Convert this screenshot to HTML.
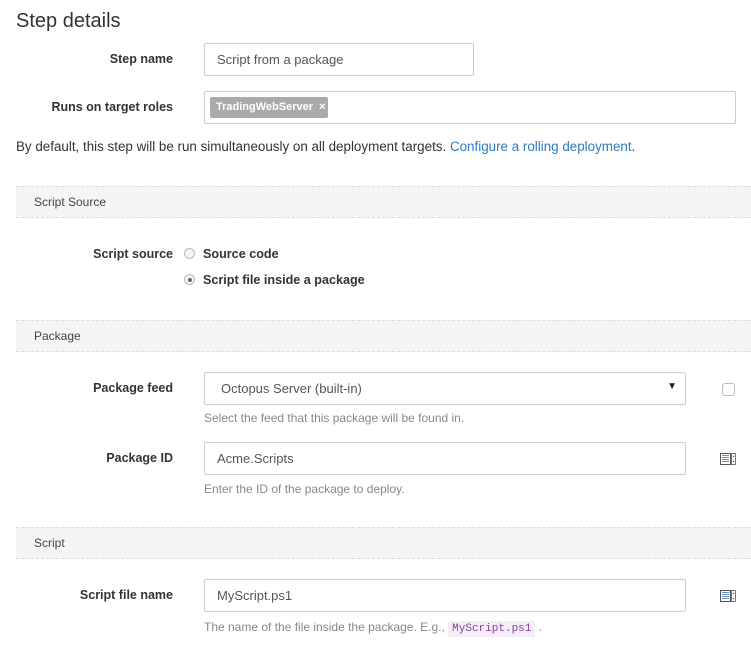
<!DOCTYPE html>
<html><head><style>
body{margin:0;width:751px;height:649px;background:#fff;font-family:"Liberation Sans",sans-serif;color:#333;position:relative;overflow:hidden;font-size:13px}
.a{position:absolute;white-space:nowrap}
.lbl{position:absolute;right:578px;font-weight:bold;font-size:12.5px;color:#333}
.inp{position:absolute;border:1px solid #ccc;border-radius:2px;background:#fff;box-sizing:border-box}
.inp span{position:absolute;left:12px;top:8px;font-size:13px;color:#555}
.band{position:absolute;left:16px;width:735px;height:32px;background:#f5f5f5;border-top:1px dashed #ddd;border-bottom:1px dashed #ddd;box-sizing:border-box}
.band span{position:absolute;left:18px;top:8px;font-size:12px;color:#444}
.help{position:absolute;left:204px;font-size:12px;color:#888}
.radio{position:absolute;left:184px;width:11px;height:11px;border:1px solid #bbb;border-radius:50%;background:#f4f4f4;box-sizing:border-box}
.ic{position:absolute;left:720px;width:16px;height:12px}
</style></head><body>
<div class="a" style="left:16px;top:10px;font-size:20px;color:#333">Step details</div>

<div class="lbl" style="top:52px">Step name</div>
<div class="inp" style="left:204px;top:43px;width:270px;height:33px"><span>Script from a package</span></div>

<div class="lbl" style="top:100px">Runs on target roles</div>
<div class="inp" style="left:204px;top:91px;width:532px;height:33px">
<div class="a" style="left:5px;top:5px;width:118px;height:21px;background:#aaa;border-radius:2px;color:#fff;font-size:11px;font-weight:bold;line-height:21px;padding-left:6px;box-sizing:border-box">TradingWebServer &nbsp;×</div></div>

<div class="a" style="left:16px;top:139px;font-size:13.4px">By default, this step will be run simultaneously on all deployment targets. <span style="color:#2e7bbf">Configure a rolling deployment</span>.</div>

<div class="band" style="top:186px"><span>Script Source</span></div>
<div class="lbl" style="top:247px">Script source</div>
<div class="radio" style="top:248px"></div>
<div class="a" style="left:203px;top:247px;font-weight:bold;font-size:12.6px">Source code</div>
<div class="radio" style="top:274px"><div style="position:absolute;left:2.5px;top:2.5px;width:4px;height:4px;border-radius:50%;background:#666"></div></div>
<div class="a" style="left:203px;top:273px;font-weight:bold;font-size:12.6px">Script file inside a package</div>

<div class="band" style="top:320px"><span>Package</span></div>
<div class="lbl" style="top:381px">Package feed</div>
<div class="inp" style="left:204px;top:372px;width:482px;height:33px"><span style="left:16px">Octopus Server (built-in)</span><div class="a" style="right:8px;top:8px;font-size:10px;color:#222">▼</div></div>
<div class="a" style="left:722px;top:383px;width:13px;height:13px;border:1px solid #bbb;border-radius:3px;box-sizing:border-box"></div>
<div class="help" style="top:411px">Select the feed that this package will be found in.</div>

<div class="lbl" style="top:451px">Package ID</div>
<div class="inp" style="left:204px;top:442px;width:482px;height:33px"><span>Acme.Scripts</span></div>
<svg class="ic" style="top:453px" viewBox="0 0 16 12"><rect x="0.5" y="0.5" width="10" height="11" fill="#fff" stroke="#555"/><path d="M2 2.5h7M2 4.5h7M2 6.5h7M2 8.5h7" stroke="#3a6ea5" stroke-width="0.8"/><rect x="11.5" y="0.5" width="4" height="11" fill="#fff" stroke="#777"/><path d="M12.5 4l1-1.5 1 1.5zM12.5 8l1 1.5 1-1.5z" fill="#555"/></svg>
<div class="help" style="top:482px">Enter the ID of the package to deploy.</div>

<div class="band" style="top:527px"><span>Script</span></div>
<div class="lbl" style="top:588px">Script file name</div>
<div class="inp" style="left:204px;top:579px;width:482px;height:33px"><span>MyScript.ps1</span></div>
<svg class="ic" style="top:590px" viewBox="0 0 16 12"><rect x="0.5" y="0.5" width="10" height="11" fill="#fff" stroke="#555"/><path d="M2 2.5h7M2 4.5h7M2 6.5h7M2 8.5h7" stroke="#3a6ea5" stroke-width="0.8"/><rect x="11.5" y="0.5" width="4" height="11" fill="#fff" stroke="#777"/><path d="M12.5 4l1-1.5 1 1.5zM12.5 8l1 1.5 1-1.5z" fill="#555"/></svg>
<div class="help" style="top:620px">The name of the file inside the package. E.g., <span style="font-family:'Liberation Mono',monospace;font-size:11px;color:#8a3d9c;background:#f5eef8;padding:2px 4px;border-radius:2px">MyScript.ps1</span> .</div>
</body></html>
